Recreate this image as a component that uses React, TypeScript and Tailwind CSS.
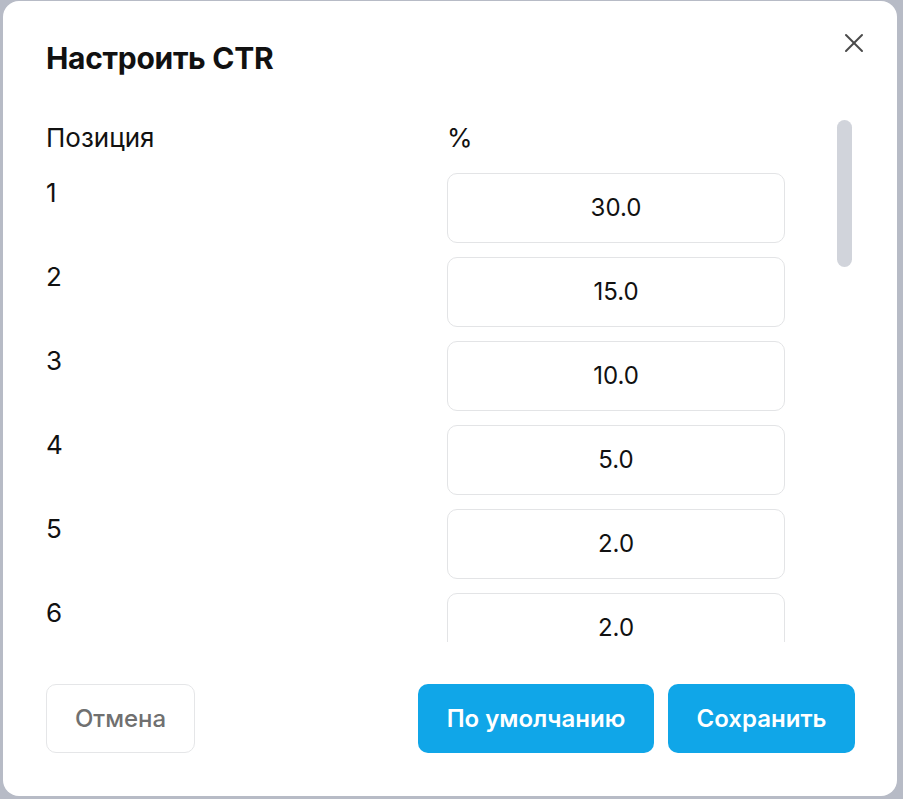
import { X } from "lucide-react";

const rows = [
  { pos: 1, value: "30.0" },
  { pos: 2, value: "15.0" },
  { pos: 3, value: "10.0" },
  { pos: 4, value: "5.0" },
  { pos: 5, value: "2.0" },
  { pos: 6, value: "2.0" },
  { pos: 7, value: "1.0" },
];

export default function App() {
  return (
    <div className="h-screen w-full bg-[#b7bbc6] pl-[3px] pt-[1px] font-['Inter',sans-serif] text-[#111]">
      <div className="relative flex h-[795px] w-[894px] flex-col rounded-2xl bg-white pb-[43px] pl-[43px] pr-[42px] pt-[39px]">
        <h2 className="h-[36px] text-[30px] font-bold leading-[36px] tracking-[-0.3px]">
          Настроить CTR
        </h2>
        <button className="absolute right-[27px] top-[26px] text-[#4a4a4a]">
          <X className="h-[32px] w-[32px]" strokeWidth={1.5} />
        </button>

        <div className="mt-[32px] flex min-h-0 flex-1 overflow-hidden">
          <div className="w-[739px] shrink-0">
            <div className="mt-[13px] flex h-[34px] items-center text-[26px] leading-[34px]">
              <div className="w-[401px]">Позиция</div>
              <div>%</div>
            </div>
            <div className="mt-[18px] flex flex-col gap-[14px]">
              {rows.map((r) => (
                <div key={r.pos} className="flex h-[70px]">
                  <div className="w-[401px] pt-[3px] text-[26px] leading-[34px]">
                    {r.pos}
                  </div>
                  <div className="flex h-[70px] w-[338px] items-center justify-center rounded-[10px] border border-[#e3e4e6] text-[24px]">
                    {r.value}
                  </div>
                </div>
              ))}
            </div>
          </div>
          <div className="flex-1" />
          <div className="w-[18px] shrink-0">
            <div className="mt-[12px] h-[147px] w-[15px] rounded-full bg-[#d1d4db]" />
          </div>
        </div>

        <div className="mt-[42px] flex h-[69px] items-stretch">
          <button className="w-[149px] whitespace-nowrap rounded-[10px] border border-[#e5e6e8] text-[24px] font-medium text-[#707070]">
            Отмена
          </button>
          <div className="flex-1" />
          <button className="w-[236px] whitespace-nowrap rounded-[10px] bg-[#10a6e8] text-[24px] font-semibold text-white">
            По умолчанию
          </button>
          <button className="ml-[14px] w-[187px] whitespace-nowrap rounded-[10px] bg-[#10a6e8] text-[24px] font-semibold text-white">
            Сохранить
          </button>
        </div>
      </div>
    </div>
  );
}
